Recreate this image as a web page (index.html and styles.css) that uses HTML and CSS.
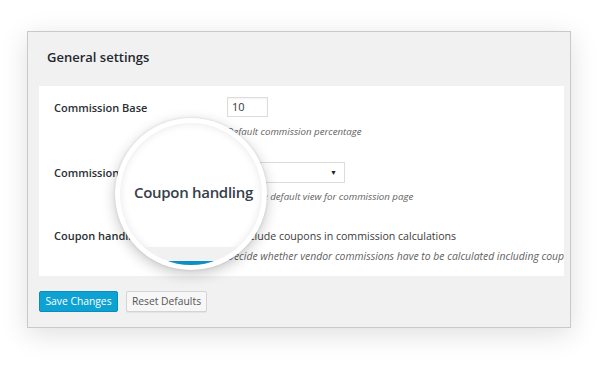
FILE: index.html
```html
<!DOCTYPE html>
<html>
<head>
<meta charset="utf-8">
<link rel="stylesheet" href="styles.css">
</head>
<body>
<div class="stage">
  <div class="panel">
    <h2 class="title">General settings</h2>
    <div class="box">
      <div class="row">
        <div class="label ctl-input">Commission Base</div>
        <div class="field">
          <div class="input">10</div>
          <p class="desc">Default commission percentage</p>
        </div>
      </div>
      <div class="row">
        <div class="label ctl-select">Commission menu</div>
        <div class="field">
          <div class="select"><span class="arrow">▼</span></div>
          <p class="desc d2">Select the default view for commission page</p>
        </div>
      </div>
      <div class="row">
        <div class="label ctl-check">Coupon handling</div>
        <div class="field">
          <label class="check"><span class="cb"></span>Include coupons in commission calculations</label>
          <p class="desc d3">Decide whether vendor commissions have to be calculated including coupons</p>
        </div>
      </div>
    </div>
    <div class="actions">
      <button class="btn primary">Save Changes</button>
      <button class="btn secondary">Reset Defaults</button>
    </div>
  </div>
  <div class="lens">
    <div class="lens-inner">
      <div class="lens-text">Coupon handling</div>
      <div class="lens-grey"></div>
      <div class="lens-blue"></div>
    </div>
  </div>
</div>
</body>
</html>
```
FILE: styles.css
```css
* { box-sizing: border-box; }
html, body { margin: 0; padding: 0; background: #fff; }
body {
  font-family: "Open Sans", "Noto Sans", sans-serif;
  color: #23282d;
  width: 600px;
  height: 368px;
  overflow: hidden;
}
.stage {
  position: relative;
  padding: 31px 29px 0 27px;
}
.panel {
  width: 544px;
  height: 297px;
  background: #f1f1f1;
  border: 1px solid #c9c9c9;
  box-shadow: 0 6px 26px rgba(0,0,0,0.13);
  padding: 0 6px 0 11px;
  display: flex;
  flex-direction: column;
}
.title {
  margin: 16px 0 20px 8px;
  font-size: 13px;
  font-weight: 600;
  line-height: 18px;
  color: #23282d;
}
.box {
  background: #fff;
  height: 190px;
  padding: 11px 0 0 15px;
  overflow: hidden;
}
.row {
  display: grid;
  grid-template-columns: 173px 1fr;
}
.row + .row { margin-top: 23px; }
.row:nth-child(3) { margin-top: 25px; }
.label {
  font-size: 11px;
  font-weight: 600;
  color: #2a2f34;
  white-space: nowrap;
}
.ctl-input { line-height: 21px; }
.ctl-select { line-height: 21px; }
.ctl-check { line-height: 14px; }
.field { min-width: 0; }
.input {
  width: 41px;
  height: 20px;
  border: 1px solid #dcdcdc;
  box-shadow: inset 0 1px 2px rgba(0,0,0,0.05);
  font-size: 11px;
  line-height: 18px;
  padding-left: 4px;
  color: #32373c;
}
.select {
  width: 118px;
  height: 21px;
  border: 1px solid #dcdcdc;
  display: flex;
  justify-content: flex-end;
  align-items: center;
  padding-right: 7px;
}
.arrow { font-size: 7px; color: #222; }
.desc {
  margin: 8px 0 0;
  font-size: 9.7px;
  font-style: italic;
  line-height: 14px;
  color: #5f5f5f;
  white-space: nowrap;
}
.d2 { margin-top: 7px; }
.d3 { margin-top: 6px; font-size: 10.4px; }
.check {
  display: flex;
  align-items: center;
  font-size: 10.6px;
  line-height: 14px;
  color: #3c3c3c;
  white-space: nowrap;
}
.cb {
  width: 11px;
  height: 11px;
  border: 1px solid #b4b9be;
  margin-right: 2px;
}
.actions {
  display: flex;
  gap: 8px;
  margin-top: 15px;
}
.btn {
  font-family: "Open Sans", "Noto Sans", sans-serif;
  font-size: 10.3px;
  height: 21px;
  padding: 0;
  border-radius: 2px;
  line-height: 19px;
  white-space: nowrap;
  text-align: center;
}
.primary {
  width: 79px;
  background: #0ea2d3;
  border: 1px solid #0a8dbc;
  color: #fff;
}
.secondary {
  width: 81px;
  background: #f7f7f7;
  border: 1px solid #d4d4d4;
  color: #555;
  box-shadow: 0 1px 0 #e4e4e4;
}
.lens {
  position: absolute;
  left: 115px;
  top: 118px;
  width: 152px;
  height: 152px;
  border-radius: 50%;
  background: #fff;
  padding: 5px;
  box-shadow: 0 4px 14px rgba(0,0,0,0.22), 0 0 3px rgba(0,0,0,0.12);
}
.lens-inner {
  position: relative;
  width: 100%;
  height: 100%;
  border-radius: 50%;
  overflow: hidden;
  background: #fff;
  box-shadow: inset 0 0 8px rgba(0,0,0,0.10);
}
.lens-text {
  position: absolute;
  left: 14px;
  top: 59px;
  font-size: 15px;
  letter-spacing: -0.3px;
  font-weight: 600;
  color: #35404a;
  white-space: nowrap;
}
.lens-grey {
  position: absolute;
  left: 0;
  right: 0;
  top: 124px;
  height: 20px;
  background: #f1f1f1;
}
.lens-blue {
  position: absolute;
  left: 0;
  right: 0;
  top: 138px;
  height: 20px;
  background: #0e8fc2;
}
```
